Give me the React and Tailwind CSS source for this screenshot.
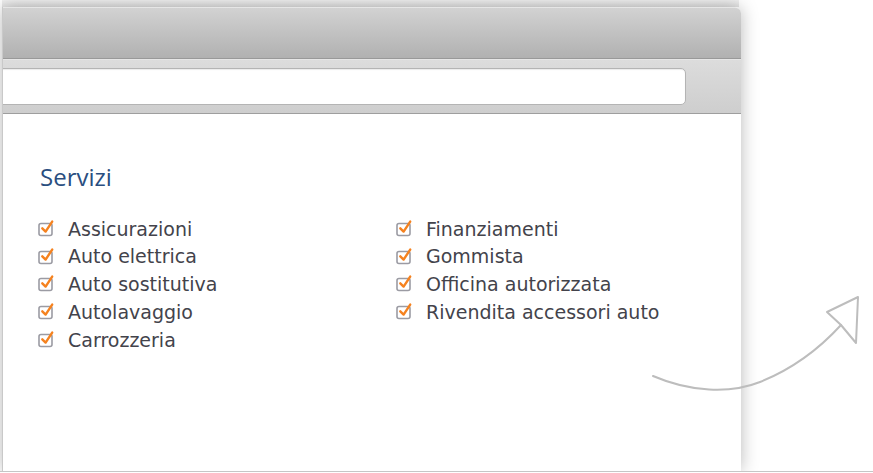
import React from 'react'

const servizi = [
  ['Assicurazioni', 'Finanziamenti'],
  ['Auto elettrica', 'Gommista'],
  ['Auto sostitutiva', 'Officina autorizzata'],
  ['Autolavaggio', 'Rivendita accessori auto'],
  ['Carrozzeria', null],
]

const CheckIcon = () => (
  <svg width="18" height="20" viewBox="0 0 18 20" className="shrink-0 block">
    <rect x="1" y="6.5" width="13" height="12" rx="2" fill="none" stroke="#9b9ba3" strokeWidth="1.6" />
    <path d="M4.3 11.3 L7.6 14.6 L14.2 4.6" fill="none" stroke="#f5821f" strokeWidth="2.4" strokeLinecap="round" strokeLinejoin="round" />
  </svg>
)

const Item = ({ label }) => (
  <div className="flex items-center h-[27.75px]">
    <div className="w-[30px] -ml-[2px] -mt-[4px] flex items-center">
      <CheckIcon />
    </div>
    <span className="text-[19px] text-[#43434b]">{label}</span>
  </div>
)

const App = () => {
  return (
    <div
      className="relative w-[873px] h-[472px] bg-white overflow-hidden border-b border-[#c6c6c6]"
      style={{ fontFamily: '"DejaVu Sans", Verdana, sans-serif' }}
    >
      <div className="pl-[2px] h-full flex flex-col">
        <div className="h-[7px] w-[737px] bg-gradient-to-b from-[#f1f1f1] to-[#e4e4e4]" />
        <div className="w-[739px] flex-1 flex flex-col bg-white border-l border-[#c9c9c9] rounded-tr-[6px] shadow-[0_0_18px_rgba(0,0,0,0.28)]">
          {/* barra del titolo */}
          <div className="h-[52px] rounded-tr-[6px] bg-gradient-to-b from-[#d2d2d2] to-[#b1b1b1] border-t border-[#e6e6e6] border-b border-b-[#999999]" />
          {/* barra indirizzo */}
          <div className="h-[55px] bg-gradient-to-b from-[#dcdcdc] to-[#cecece] border-t border-[#e6e6e6] border-b border-b-[#9e9e9e] pt-[8px] overflow-hidden">
            <div className="-ml-[12px] w-[695px] h-[37px] bg-white border border-[#b4b4b4] rounded-[5px] shadow-[inset_0_1px_1px_rgba(0,0,0,0.08)]" />
          </div>
          {/* contenuto */}
          <div className="flex-1 pl-[37px] pt-[48px]">
            <h2
              className="text-[24px] leading-[29px] text-[#2a4e80]"
              style={{ fontFamily: '"Open Sans", sans-serif' }}
            >
              Servizi
            </h2>
            <div className="mt-[24px] grid grid-cols-[358px_1fr]">
              <div>
                {servizi.map(([a]) => (
                  <Item key={a} label={a} />
                ))}
              </div>
              <div>
                {servizi.filter(([, b]) => b).map(([, b]) => (
                  <Item key={b} label={b} />
                ))}
              </div>
            </div>
          </div>
        </div>
      </div>

      {/* freccia */}
      <svg className="absolute left-0 top-0 pointer-events-none" width="873" height="473">
        <path d="M653 376 C 690 392, 730 394, 760 382 C 795 368, 820 348, 841 325" fill="none" stroke="#bdbdbd" strokeWidth="2" strokeLinecap="round" />
        <path d="M841 325 L827 312 L858 297 L856 343 Z" fill="none" stroke="#bdbdbd" strokeWidth="2" strokeLinejoin="round" />
      </svg>
    </div>
  )
}

export default App
